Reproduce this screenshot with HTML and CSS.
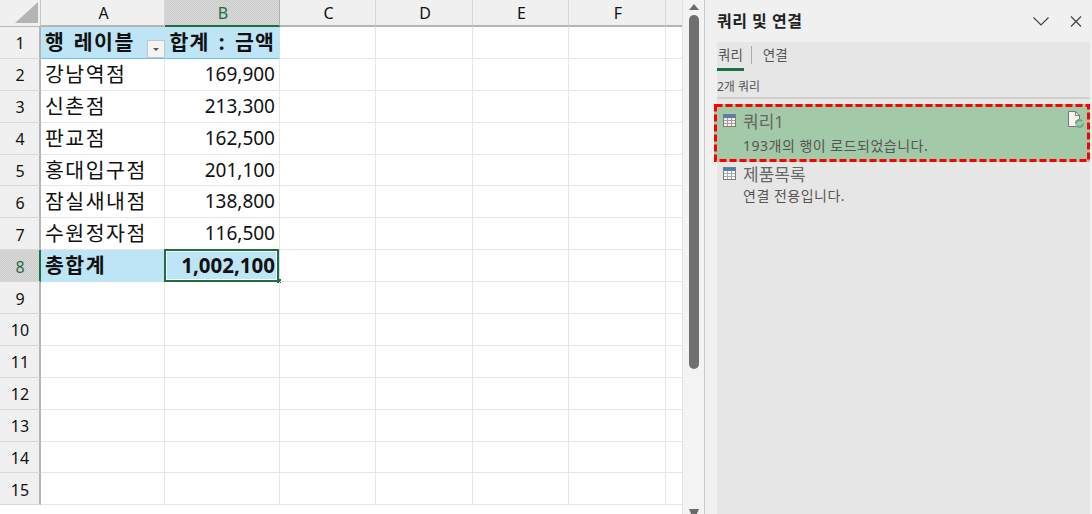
FILE: index.html
```html
<!DOCTYPE html>
<html lang="ko">
<head>
<meta charset="utf-8">
<title>쿼리 및 연결</title>
<link rel="stylesheet" href="styles.css">
</head>
<body>
<div class="app">
  <div class="sheet">
    <div class="row head">
      <div class="corner"><svg width="40" height="26" viewBox="0 0 40 26"><path d="M38 2v21H15z" fill="#b4b4b4"/></svg></div>
      <div class="ch">A</div><div class="ch sel">B</div><div class="ch">C</div><div class="ch">D</div><div class="ch">E</div><div class="ch">F</div><div class="ch last"></div>
    </div>
    <div class="row">
      <div class="rh">1</div>
      <div class="c pv pvtop b ko">행 레이블<span class="drop"><svg width="14" height="14" viewBox="0 0 14 14"><path d="M4 6h6L7 9z" fill="#555"/></svg></span></div>
      <div class="c pv pvtop b num ko">합계 : 금액</div><div class="c"></div><div class="c"></div><div class="c"></div><div class="c"></div><div class="c last"></div>
    </div>
    <div class="row"><div class="rh">2</div><div class="c ko">강남역점</div><div class="c num">169,900</div><div class="c"></div><div class="c"></div><div class="c"></div><div class="c"></div><div class="c last"></div></div>
    <div class="row"><div class="rh">3</div><div class="c ko">신촌점</div><div class="c num">213,300</div><div class="c"></div><div class="c"></div><div class="c"></div><div class="c"></div><div class="c last"></div></div>
    <div class="row"><div class="rh">4</div><div class="c ko">판교점</div><div class="c num">162,500</div><div class="c"></div><div class="c"></div><div class="c"></div><div class="c"></div><div class="c last"></div></div>
    <div class="row"><div class="rh">5</div><div class="c ko">홍대입구점</div><div class="c num">201,100</div><div class="c"></div><div class="c"></div><div class="c"></div><div class="c"></div><div class="c last"></div></div>
    <div class="row"><div class="rh">6</div><div class="c ko">잠실새내점</div><div class="c num">138,800</div><div class="c"></div><div class="c"></div><div class="c"></div><div class="c"></div><div class="c last"></div></div>
    <div class="row"><div class="rh">7</div><div class="c ko">수원정자점</div><div class="c num">116,500</div><div class="c"></div><div class="c"></div><div class="c"></div><div class="c"></div><div class="c last"></div></div>
    <div class="row"><div class="rh sel">8</div><div class="c pv b ko">총합계</div><div class="c pv b num total active">1,002,100<span class="handle"></span></div><div class="c"></div><div class="c"></div><div class="c"></div><div class="c"></div><div class="c last"></div></div>
    <div class="row"><div class="rh">9</div><div class="c"></div><div class="c"></div><div class="c"></div><div class="c"></div><div class="c"></div><div class="c"></div><div class="c last"></div></div>
    <div class="row"><div class="rh">10</div><div class="c"></div><div class="c"></div><div class="c"></div><div class="c"></div><div class="c"></div><div class="c"></div><div class="c last"></div></div>
    <div class="row"><div class="rh">11</div><div class="c"></div><div class="c"></div><div class="c"></div><div class="c"></div><div class="c"></div><div class="c"></div><div class="c last"></div></div>
    <div class="row"><div class="rh">12</div><div class="c"></div><div class="c"></div><div class="c"></div><div class="c"></div><div class="c"></div><div class="c"></div><div class="c last"></div></div>
    <div class="row"><div class="rh">13</div><div class="c"></div><div class="c"></div><div class="c"></div><div class="c"></div><div class="c"></div><div class="c"></div><div class="c last"></div></div>
    <div class="row"><div class="rh">14</div><div class="c"></div><div class="c"></div><div class="c"></div><div class="c"></div><div class="c"></div><div class="c"></div><div class="c last"></div></div>
    <div class="row"><div class="rh">15</div><div class="c"></div><div class="c"></div><div class="c"></div><div class="c"></div><div class="c"></div><div class="c"></div><div class="c last"></div></div>
  </div>
  <div class="vscroll">
    <svg class="arrow" width="14" height="8" viewBox="0 0 14 8"><path d="M7 1l5 6H2z" fill="#6b6b6b"/></svg>
    <div class="thumb"></div>
    <svg class="arrow down" width="14" height="8" viewBox="0 0 14 8"><path d="M2 0h10L9 7H5z" fill="#6b6b6b"/></svg>
  </div>
  <aside class="panel">
    <header class="ptitle">
      <span class="ptext">쿼리 및 연결</span>
      <span class="pbtns">
        <svg width="16" height="9" viewBox="0 0 16 9"><path d="M.5.5L8 8 15.5.5" fill="none" stroke="#444" stroke-width="1.2"/></svg>
        <svg width="12" height="11" viewBox="0 0 12 11"><path d="M1 .5l10 10M11 .5l-10 10" fill="none" stroke="#444" stroke-width="1.2"/></svg>
      </span>
    </header>
    <div class="pbody">
      <div class="tabs"><span class="tab on">쿼리</span><span class="tab">연결</span></div>
      <div class="count">2개 쿼리</div>
      <div class="item hi">
        <svg class="dash" width="376" height="58" viewBox="0 0 376 58"><rect x="1.5" y="1.5" width="373" height="55" fill="none" stroke="#f00" stroke-width="3" stroke-dasharray="7 3"/></svg>
        <div class="iname">
          <svg class="tbl" width="13" height="13" viewBox="0 0 13 13"><rect x=".5" y=".5" width="12" height="12" fill="#fbeeea" stroke="#7d7d7d"/><path d="M1 1h11v3H1z" fill="#4f7fb4"/><path d="M4.500 4v8M8.500 4v8M1 6.500h11M1 9.500h11" stroke="#a89a9a"/></svg>
          <span>쿼리1</span>
          <svg class="doc" width="16" height="18" viewBox="0 0 16 18"><path d="M.5.5h7l4 4v11H.5z" fill="#fdf3f0" stroke="#777"/><path d="M7.500.5v4h4" fill="none" stroke="#777"/><circle cx="11.500" cy="12.500" r="4.500" fill="#a2c9a8"/><path d="M8 12.500a3.500 3.500 0 0 1 6.200-2.200M15 12.500a3.500 3.500 0 0 1-6.200 2.200" fill="none" stroke="#6fa582" stroke-width="2"/></svg>
        </div>
        <div class="isub">193개의 행이 로드되었습니다.</div>
      </div>
      <div class="item">
        <div class="iname">
          <svg class="tbl" width="13" height="13" viewBox="0 0 13 13"><rect x=".5" y=".5" width="12" height="12" fill="#fff" stroke="#7d7d7d"/><path d="M1 1h11v3H1z" fill="#4f7fb4"/><path d="M4.500 4v8M8.500 4v8M1 6.500h11M1 9.500h11" stroke="#aaa"/></svg>
          <span>제품목록</span>
        </div>
        <div class="isub">연결 전용입니다.</div>
      </div>
    </div>
  </aside>
</div>
</body>
</html>
```

FILE: styles.css
```css
* { box-sizing: border-box; }
html, body { margin: 0; height: 100%; overflow: hidden; }
body { font-family: "Noto Sans", "Noto Sans CJK KR", sans-serif; background: #fff; color: #111; }
.app { display: flex; width: 1092px; height: 514px; overflow: hidden; }

.sheet { width: 682px; flex: none; overflow: hidden; }
.row { display: grid; grid-template-columns: 41px 124px 115px 96px 97px 96px 97px 16px; height: 31.9px; }
.row.head { height: 27px; }
.corner { background: #f0f0f0; border-right: 1px solid #c6c6c6; border-bottom: 1px solid #b4b4b4; }
.corner svg { display: block; }
.ch { background: #f0f0f0; border-right: 1px solid #d8d8d8; border-bottom: 2px solid #b4b4b4; display: flex; align-items: center; justify-content: center; font-size: 16px; line-height: 1; padding-left: 2px; }
.ch.sel { background: repeating-conic-gradient(#cdcdcd 0 25%, #d8d8d8 0 50%) 0 0 / 2px 2px; color: #1f6e43; border-bottom-color: #1f6e43; border-right-color: #b0b0b0; }
.rh { background: #f0f0f0; border-right: 2px solid #b4b4b4; border-bottom: 1px solid #d8d8d8; display: flex; align-items: center; justify-content: center; font-size: 16px; line-height: 1; padding: 2px 0 0 1px; }
.rh.sel { background: repeating-conic-gradient(#cdcdcd 0 25%, #d8d8d8 0 50%) 0 0 / 2px 2px; color: #1f6e43; border-right-color: #1f6e43; }
.c { position: relative; border-right: 1px solid #e6e6e6; border-bottom: 1px solid #e6e6e6; font-size: 19px; line-height: 30px; padding: 0 4px; white-space: nowrap; color: #111; }
.c.last, .ch.last { border-right: 0; }
.ko { font-size: 20.5px; letter-spacing: 1.5px; word-spacing: 1.5px; }
.num.ko { word-spacing: 3px; letter-spacing: 1.1px; }
.num { text-align: right; }
.b { font-weight: 700; }
.total { font-size: 20.5px; }
.pv { background: #bde5f6; border-right-color: #bde5f6; border-bottom-color: #bde5f6; }
.pvtop { border-bottom-color: #6cc0e8; }
.drop { position: absolute; right: -1px; top: 13px; width: 18px; height: 18px; background: #f4f4f4; border: 1px solid #c4c4c4; display: flex; align-items: center; justify-content: center; }
.active::before { content: ""; position: absolute; inset: -1px 0 -1px -1px; border: 2px solid #1f6e43; box-shadow: inset 0 0 0 1px #fff; }
.handle { position: absolute; right: -2px; bottom: -2px; width: 4px; height: 4px; background: #1f6e43; }

.vscroll { width: 23px; flex: none; background: #f3f3f4; border-left: 1px solid #e2e2e2; border-right: 1px solid #c8c8c8; display: flex; flex-direction: column; align-items: center; padding: 3px 0 0; }
.thumb { width: 10px; height: 354px; margin: 4px 0 140px; background: #707070; border-radius: 5px; flex: none; }
.arrow { flex: none; }

.panel { flex: 1; background: #f0f0f0; display: flex; flex-direction: column; padding-left: 12px; padding-right: 6px; }
.ptitle { height: 42px; flex: none; display: flex; align-items: center; justify-content: space-between; font-size: 16px; font-weight: 700; letter-spacing: .5px; color: #222; padding-bottom: 3px; }
.pbtns { display: flex; align-items: center; gap: 21px; padding: 3px 8px 0 0; }
.pbody { flex: 1; background: #e6e6e6; display: flex; flex-direction: column; }
.tabs { display: flex; height: 29px; flex: none; font-size: 13.5px; line-height: 18px; color: #555; align-items: flex-start; padding-top: 4px; }
.tab { height: 24px; padding: 0 11px; }
.tab.on { padding: 0 8px 0 1px; border-right: 1px solid #aaa; height: 18px; position: relative; }
.tab.on::after { content: ""; position: absolute; left: 0; right: 7px; top: 22px; height: 3px; background: #1f6e43; }
.count { height: 28px; flex: none; font-size: 12px; line-height: 31px; color: #555; border-bottom: 2px solid #cfcfcf; }
.item { padding: 0 0 0 6px; height: 56px; flex: none; }
.item .iname { height: 22px; }
.item.hi { position: relative; background: #a2c9a8; margin: 5px 0 0 -3px; width: 376px; height: 58px; padding: 3px 6px 0 9px; }
.item.hi .iname { height: 26px; }
.item.hi .isub { line-height: 26px; }
.dash { position: absolute; left: 0; top: 0; }
.iname { display: flex; align-items: center; gap: 7px; font-size: 17px; color: #666; }
.doc { margin-left: auto; }
.isub { padding-left: 20px; font-size: 14px; letter-spacing: .5px; color: #555; line-height: 24px; }
```
